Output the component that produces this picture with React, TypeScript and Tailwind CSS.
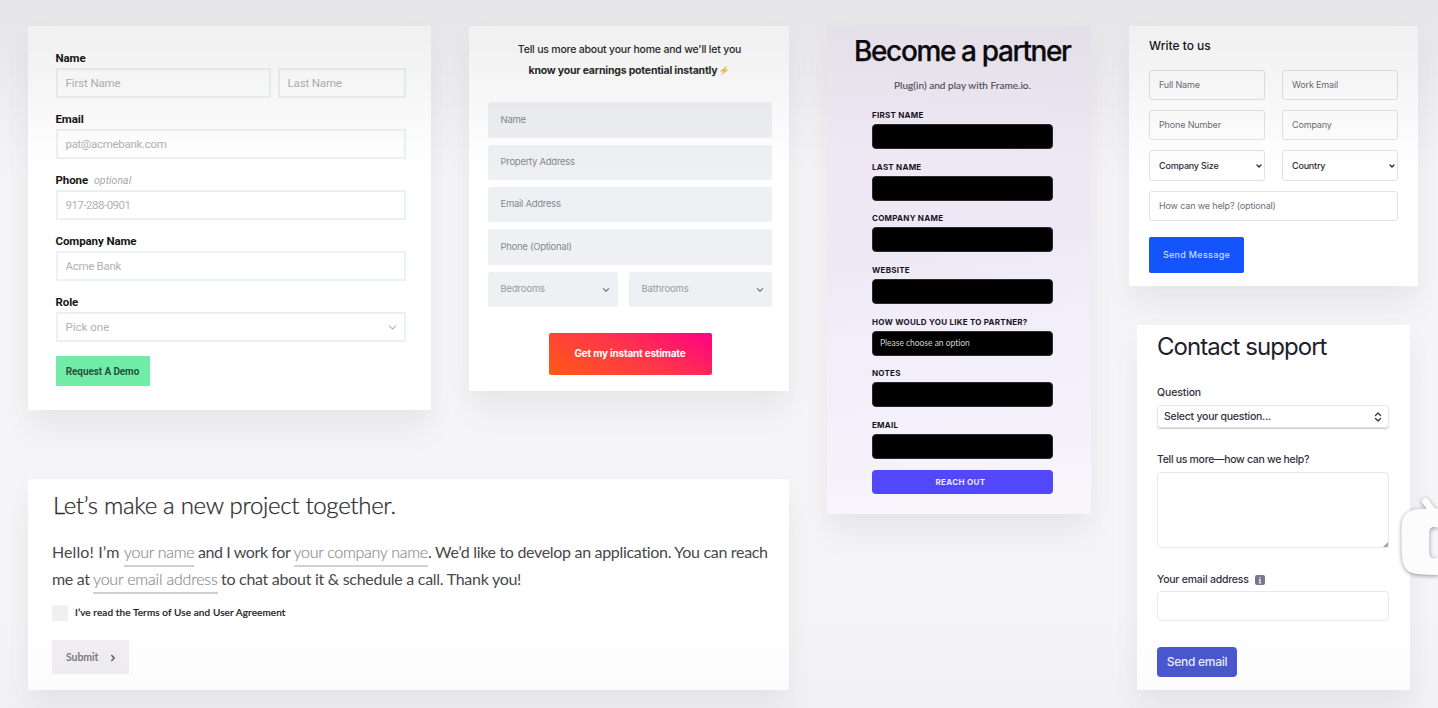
import type { ReactNode } from "react";
import { ChevronDown, ChevronRight, ChevronsUpDown } from "lucide-react";

const cardShadow = "shadow-[0_24px_30px_rgba(0,0,0,0.035),0_10px_30px_rgba(0,0,0,0.03)]";

/* Demo request */
function DemoField({ label, hint, children }: { label: string; hint?: string; children: ReactNode }) {
  return (
    <div className="flex h-[47px] flex-col">
      <div className="flex h-[17px] items-start text-[11.5px] leading-[15px]">
        <span className="font-bold tracking-[-0.1px] text-[#161616]">{label}</span>
        {hint && <span className="ml-1.5 text-[10.5px] tracking-[0.05px] italic text-[#a8a8a8]">{hint}</span>}
      </div>
      <div className="flex h-[30px] gap-[7px]">{children}</div>
    </div>
  );
}

function DemoInput({ text, className = "" }: { text: string; className?: string }) {
  return (
    <div className={"flex flex-1 items-center border-2 border-[#ebf2f2] px-2 pt-px text-[11.5px] text-[#b2b2b4] " + className}>
      <span className="whitespace-nowrap">{text}</span>
    </div>
  );
}

function DemoCard() {
  return (
    <section className={"h-[384px] w-[403px] bg-white pt-[25px] pl-[27.5px] font-['Roboto',sans-serif] " + cardShadow}>
      <div className="flex h-[291px] w-[350px] flex-col justify-between">
        <DemoField label="Name">
          <DemoInput text="First Name" className="tracking-[-0.12px]" />
          <DemoInput text="Last Name" className="max-w-[128px] tracking-[-0.15px]" />
        </DemoField>
        <DemoField label="Email">
          <DemoInput text="pat@acmebank.com" className="tracking-[-0.3px]" />
        </DemoField>
        <DemoField label="Phone" hint="optional">
          <DemoInput text="917-288-0901" className="tracking-[-0.5px]" />
        </DemoField>
        <DemoField label="Company Name">
          <DemoInput text="Acme Bank" className="tracking-[-0.3px]" />
        </DemoField>
        <DemoField label="Role">
          <div className="flex flex-1 items-center justify-between border-2 border-[#ebf2f2] pt-px pr-[5px] pl-2 text-[11.5px] text-[#b2b2b4]">
            <span>Pick one</span>
            <ChevronDown size={13} strokeWidth={2} />
          </div>
        </DemoField>
      </div>
      <button className="mt-[14px] flex h-[30px] w-[94px] items-center justify-center bg-[#72eda9] pt-px text-[10px] font-bold tracking-[-0.1px] whitespace-nowrap text-[#25523b]">
        Request A Demo
      </button>
    </section>
  );
}

/* Earnings estimate */
function EstimateInput({ text, className = "h-[35px]" }: { text: string; className?: string }) {
  return (
    <div className={"flex items-center rounded-[2px] bg-[#eff0f4] pl-[13px] text-[9.5px] tracking-[-0.28px] text-[#84898f] " + className}>
      {text}
    </div>
  );
}

function EstimateSelect({ text, className }: { text: string; className: string }) {
  return (
    <div className={"flex h-[35px] items-center justify-between rounded-[2px] bg-[#eff0f4] pr-[7px] pl-[13px] text-[9.5px] tracking-[-0.16px] text-[#969aa1] " + className}>
      {text}
      <ChevronDown size={10} strokeWidth={3} className="text-[#7d8086]" />
    </div>
  );
}

function EstimateCard() {
  return (
    <section className={"flex h-[365px] w-[320px] flex-col bg-white pt-[13px] font-['Inter',sans-serif] " + cardShadow}>
      <h2 className="pl-px text-center text-[10.5px] leading-[21px] tracking-[-0.2px] text-[#2b2b2b]">
        <span className="block font-medium">Tell us more about your home and we'll let you</span>
        <span className="flex items-center justify-center pr-px font-bold">
          know your earnings potential instantly
          <svg viewBox="0 0 12 14" className="ml-[2px] h-[11px] w-[10px]">
            <path d="M10.5 0.4 0.5 8.2h4.600L1.800 13.6 11.8 5.8H7.200z" fill="#f6c04a" />
          </svg>
        </span>
      </h2>
      <div className="mt-[21px] ml-[18.5px] flex w-[284px] flex-col gap-[7px]">
        <EstimateInput text="Name" className="h-[36px]" />
        <EstimateInput text="Property Address" />
        <EstimateInput text="Email Address" />
        <EstimateInput text="Phone (Optional)" className="h-[36px]" />
        <div className="flex justify-between">
          <EstimateSelect text="Bedrooms" className="w-[130px]" />
          <EstimateSelect text="Bathrooms" className="w-[143px]" />
        </div>
      </div>
      <button className="mt-[26px] ml-[79.5px] flex h-[42px] w-[163px] items-center justify-center rounded-[2px] bg-[linear-gradient(28deg,#ff5a14_0%,#ff3848_50%,#ff0083_100%)] pb-[2px] text-[10px] font-bold tracking-[-0.2px] text-white">
        Get my instant estimate
      </button>
    </section>
  );
}

/* Project brief */
function Blank({ text, className }: { text: string; className: string }) {
  return (
    <span className={"flex h-[29px] items-start border-b-2 border-[#d0d0d3] font-light text-[#8a8a8d] [-webkit-text-stroke:0.15px_#8a8a8d] " + className}>
      {text}
    </span>
  );
}

function ProjectCard() {
  return (
    <section className={"h-[211px] w-[761px] bg-white pl-[24px] font-['Lato',sans-serif] text-[#48484b] " + cardShadow}>
      <h1 className="pt-[10px] pl-px text-[24px] leading-[32px] font-light tracking-[-0.3px] whitespace-nowrap text-[#2a2a2c] [-webkit-text-stroke:0.25px_#2a2a2c]">
        Let’s make a new project together.
      </h1>
      <div className="mt-[17px] text-[16px] leading-[27px] whitespace-nowrap">
        <div className="flex h-[27px]">
          <span className="w-[72px] tracking-[0.1px]">Hello! I’m</span>
          <Blank text="your name" className="w-[70px] tracking-[-0.3px]" />
          <span className="ml-[4px] w-[95.5px] tracking-[-0.4px]">and I work for</span>
          <Blank text="your company name" className="w-[134.5px] tracking-[-0.3px]" />
          <span className="tracking-[-0.31px]">. We’d like to develop an application. You can reach</span>
        </div>
        <div className="flex h-[27px]">
          <span className="w-[41px] tracking-[-0.3px]">me at</span>
          <Blank text="your email address" className="w-[125px] tracking-[-0.2px]" />
          <span className="ml-[3px] tracking-[-0.28px]">to chat about it &amp; schedule a call. Thank you!</span>
        </div>
      </div>
      <div className="mt-[13px] flex items-center gap-[7px]">
        <span className="h-4 w-4 rounded-[2px] bg-[#f0eff1]" />
        <span className="pb-px text-[10px] leading-[15px] font-medium tracking-[0.1px] text-[#222] [-webkit-text-stroke:0.2px_#222]">I’ve read the Terms of Use and User Agreement</span>
      </div>
      <button className="mt-[19px] flex h-[34px] w-[77px] items-center bg-[#f0eef0] pt-px pl-[14px] text-[10.5px] font-bold tracking-[-0.1px] text-[#7a7a7d]">
        Submit
        <ChevronRight size={10} strokeWidth={3.5} className="ml-[10px] text-[#555]" />
      </button>
    </section>
  );
}

/* Partner signup */
function PartnerField({ label, children }: { label: string; children?: ReactNode }) {
  return (
    <div className="flex h-[39px] flex-col justify-between">
      <span className="text-[8px] leading-[10px] font-bold tracking-[0.25px] whitespace-nowrap text-[#17141c]">{label}</span>
      <div className="flex h-[25px] items-center rounded-[4px] border border-[#2a2730] bg-black px-[7px] font-['Lato',sans-serif] text-[8.5px] tracking-[-0.02px] text-[#d2d2d2]">
        {children}
      </div>
    </div>
  );
}

function PartnerCard() {
  return (
    <section className={"h-[488px] w-[264px] bg-[linear-gradient(172deg,#f3eef7_0%,#eee7f5_40%,#f2effb_66%,#f5f2fb_85%,#f9f6fb_100%)] font-['Inter',sans-serif] " + cardShadow}>
      <h1 className="pt-[8px] pl-[27px] text-[28px] leading-[34px] font-medium tracking-[-1.37px] whitespace-nowrap text-[#0c0a0e] [-webkit-text-stroke:0.25px_#0c0a0e]">
        Become a partner
      </h1>
      <p className="mt-[9px] pr-px pl-[8px] text-center font-['Lato',sans-serif] text-[10px] leading-[16px] tracking-[0.04px] text-[#55525a] [-webkit-text-stroke:0.15px_#55525a]">
        Plug(in) and play with Frame.io.
      </p>
      <div className="mt-[17px] ml-[45px] flex h-[349px] w-[181px] flex-col justify-between">
        <PartnerField label="FIRST NAME" />
        <PartnerField label="LAST NAME" />
        <PartnerField label="COMPANY NAME" />
        <PartnerField label="WEBSITE" />
        <PartnerField label="HOW WOULD YOU LIKE TO PARTNER?">Please choose an option</PartnerField>
        <PartnerField label="NOTES" />
        <PartnerField label="EMAIL" />
      </div>
      <button className="mt-[11px] ml-[45px] flex h-[24px] w-[181px] items-center justify-center rounded-[4px] bg-[#5347fb] pr-1 text-[8px] font-bold tracking-[0.34px] text-[#ece9ff]">
        REACH OUT
      </button>
    </section>
  );
}

/* Sales message */
function MessageInput({ text, className = "" }: { text: string; className?: string }) {
  return (
    <div className={"flex h-[30px] items-center rounded-[3px] border-[1.5px] border-[#e2e2e6] px-[9px] text-[9px] tracking-[-0.15px] text-[#6d6d78] " + className}>
      {text}
    </div>
  );
}

function MessageSelect({ text }: { text: string }) {
  return (
    <div className="flex h-[31px] items-center justify-between rounded-[3px] border-[1.5px] border-[#e2e2e6] pr-px pl-[9px] text-[9px] font-medium tracking-[-0.2px] text-[#2c2c34]">
      {text}
      <ChevronDown size={8} strokeWidth={4} />
    </div>
  );
}

function MessageCard() {
  return (
    <section className={"h-[260px] w-[289px] bg-white pl-[20px] font-['Inter',sans-serif] " + cardShadow}>
      <h2 className="pt-[11px] text-[12px] leading-[17px] font-medium text-[#15151a]">Write to us</h2>
      <div className="mt-[16px] grid w-[249px] grid-cols-[116px_116px] justify-between gap-y-[10px]">
        <MessageInput text="Full Name" />
        <MessageInput text="Work Email" />
        <MessageInput text="Phone Number" />
        <MessageInput text="Company" />
        <MessageSelect text="Company Size" />
        <MessageSelect text="Country" />
        <MessageInput text="How can we help? (optional)" className="col-span-2" />
      </div>
      <button className="mt-[16px] flex h-[36px] w-[95px] items-center justify-center rounded-[2px] bg-[#1355fa] text-[9px] font-medium tracking-[0.3px] text-[#c6dbff]">
        <span className="whitespace-nowrap">Send Message</span>
      </button>
    </section>
  );
}

/* Support request */
function SupportCard() {
  return (
    <section className={"ml-[8px] h-[365px] w-[273px] bg-white pl-[20px] font-['Inter',sans-serif] text-[10.5px] font-medium text-[#32313f] " + cardShadow}>
      <h1 className="pt-[6px] text-[24px] leading-[32px] font-normal tracking-[-0.95px] text-[#21202b]">Contact support</h1>
      <div className="mt-[21px] leading-[17px] tracking-[-0.13px]">Question</div>
      <div className="mt-[4px] flex h-[23px] w-[232px] items-center justify-between rounded-[4px] border border-[#e6e6e9] pr-[4px] pl-[6px] tracking-[-0.25px] shadow-[0_1px_1px_rgba(0,0,0,0.22)]">
        Select your question...
        <ChevronsUpDown size={12} strokeWidth={2.5} />
      </div>
      <div className="mt-[24px] leading-[16px] tracking-[-0.31px]">Tell us more—how can we help?</div>
      <div className="mt-[4px] flex h-[76px] w-[232px] items-end justify-end rounded-[4px] border-[1.5px] border-[#e9e9ec]">
        <svg viewBox="0 0 5 5" className="h-[5px] w-[5px]">
          <path d="M5 0V5H0z" fill="#a5a5a8" />
        </svg>
      </div>
      <div className="mt-[24px] flex items-center leading-[16px] tracking-[-0.23px]">
        Your email address
        <svg viewBox="0 0 10 10" className="ml-[6px] h-[10px] w-[10px]">
          <rect width="10" height="10" rx="2" fill="#77768a" />
          <path d="M5 2v1.3M3.8 4.6H5V8M3.8 8h2.4" stroke="#f1f1f6" strokeWidth="1.2" fill="none" />
        </svg>
      </div>
      <div className="mt-[3px] h-[30px] w-[232px] rounded-[4px] border-[1.5px] border-[#e9e9ec]" />
      <button className="mt-[26px] flex h-[30px] w-[80px] items-center justify-center rounded-[4px] bg-[#4959ce] text-[12px] tracking-[-0.25px] text-[#e9ebff]">
        Send email
      </button>
    </section>
  );
}

export default function App() {
  return (
    <main className="relative flex h-[708px] w-[1438px] overflow-hidden bg-[#f5f4f7] pt-[26px] pl-[28px]">
      <div className="flex w-[761px] flex-col">
        <div className="flex h-[453px] items-start justify-between">
          <DemoCard />
          <EstimateCard />
        </div>
        <ProjectCard />
      </div>
      <div className="ml-[38px]">
        <PartnerCard />
      </div>
      <div className="ml-[38px] flex flex-col gap-[39px]">
        <MessageCard />
        <SupportCard />
      </div>
      <div className="pointer-events-none absolute inset-0 bg-[linear-gradient(180deg,rgba(0,0,0,0.06)_0,rgba(0,0,0,0.055)_40px,rgba(0,0,0,0.01)_145px,rgba(0,0,0,0)_180px,rgba(0,0,0,0)_610px,rgba(0,0,0,0.015)_708px)]" />
      <svg viewBox="0 0 58 110" className="absolute top-[480px] left-[1380px] h-[110px] w-[58px] drop-shadow-[0_1px_2px_rgba(0,0,0,0.4)]">
        <path d="M45.5 21.5 54 33" stroke="#fcfcfc" strokeWidth="7" strokeLinecap="round" />
        <path
          fillRule="evenodd"
          fill="#fcfcfc"
          d="M58 28.5C50 28.5 43 28.6 36 29.3C27 30.5 22.2 36 21.8 45C21.2 56 21.3 68 22.2 78C23.2 88 28 93 37 94C44 94.7 51 95 58 95V77C53 80 49.300 78 49.300 73V53C49.300 47 53 46 58 47.500Z"
        />
      </svg>
    </main>
  );
}
